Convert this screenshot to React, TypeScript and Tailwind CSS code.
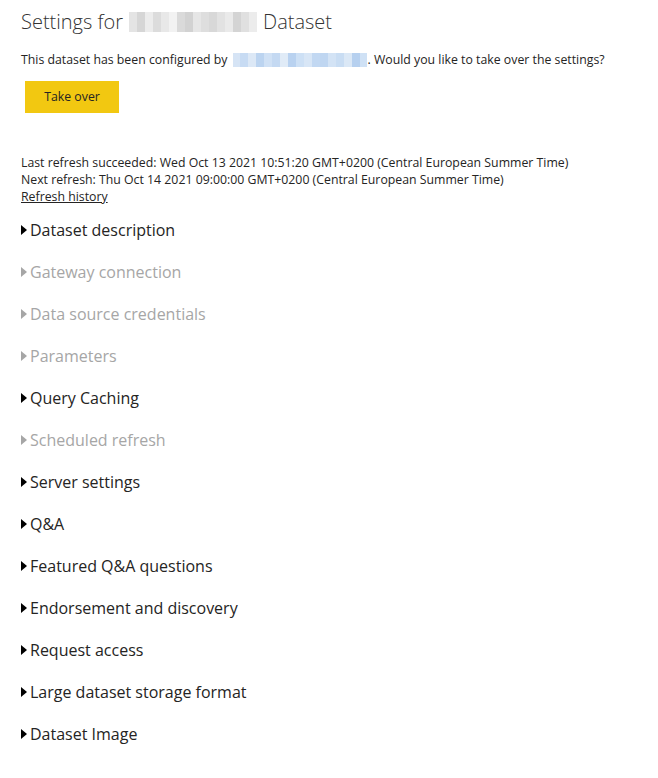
import React from 'react'

const sections: { label: string; disabled?: boolean }[] = [
  { label: 'Dataset description' },
  { label: 'Gateway connection', disabled: true },
  { label: 'Data source credentials', disabled: true },
  { label: 'Parameters', disabled: true },
  { label: 'Query Caching' },
  { label: 'Scheduled refresh', disabled: true },
  { label: 'Server settings' },
  { label: 'Q&A' },
  { label: 'Featured Q&A questions' },
  { label: 'Endorsement and discovery' },
  { label: 'Request access' },
  { label: 'Large dataset storage format' },
  { label: 'Dataset Image' },
]

// pixelated placeholder for the redacted dataset name
const nameBlur = ['#e4e4e4', '#d6d6d6', '#ececec', '#dcdcdc', '#e8e8e8', '#f2f2f2', '#dadada', '#d2d2d2', '#e6e6e6', '#dedede', '#d8d8d8', '#e2e2e2', '#eaeaea', '#d4d4d4', '#e0e0e0', '#ececec']
const emailBlur = ['#d6e4f5', '#c7dbf3', '#dce8f6', '#bcd4f0', '#d0e1f5', '#c4d9f2', '#e0ebf7', '#b9d2f0', '#cde0f5', '#d8e6f6', '#c2d8f2', '#bfd6f1', '#d3e3f5', '#c9ddf3', '#dbe8f6', '#b6d0ef', '#cfe1f5']

function Caret({ disabled }: { disabled?: boolean }) {
  return (
    <svg width="6" height="10" viewBox="0 0 6 10" className="mr-[3px] shrink-0">
      <path d="M0 0 L6 5 L0 10 Z" fill={disabled ? '#a6a6a6' : '#000000'} />
    </svg>
  )
}

export default function App() {
  return (
    <div className="min-h-[778px] bg-white pl-[21px] pt-[6px] text-[#252423]" style={{ fontFamily: '"Open Sans", sans-serif' }}>
      {/* Header */}
      <h1 className="flex items-center text-[20px] font-light leading-[32px] text-[#333333]">
        <span>Settings for</span>
        <span className="mx-[6px] flex h-[20px] w-[128px]">
          {nameBlur.map((c, i) => (
            <span key={i} className="h-full flex-1" style={{ background: c }} />
          ))}
        </span>
        <span>Dataset</span>
      </h1>
      <p className="mt-[13px] flex items-center text-[12.3px] leading-[18px]">
        <span>This dataset has been configured by</span>
        <span className="ml-[5px] flex h-[14px] w-[135px]">
          {emailBlur.map((c, i) => (
            <span key={i} className="h-full flex-1" style={{ background: c }} />
          ))}
        </span>
        <span>. Would you like to take over the settings?</span>
      </p>
      <button className="ml-[4px] mt-[12px] h-[32px] w-[94px] bg-[#f2c811] text-[12.3px] text-[#252423]">Take over</button>

      {/* Refresh info */}
      <div className="mt-[41px] text-[12.3px] leading-[17px]">
        <div>Last refresh succeeded: Wed Oct 13 2021 10:51:20 GMT+0200 (Central European Summer Time)</div>
        <div>Next refresh: Thu Oct 14 2021 09:00:00 GMT+0200 (Central European Summer Time)</div>
        <div className="underline">Refresh history</div>
      </div>

      {/* Sections */}
      <div className="mt-[14px] flex flex-col gap-[20px]">
        {sections.map((s) => (
          <div key={s.label} className={`flex h-[22px] items-center text-[16px] ${s.disabled ? 'text-[#a6a6a6]' : 'text-[#252423]'}`}>
            <Caret disabled={s.disabled} />
            <span>{s.label}</span>
          </div>
        ))}
      </div>
    </div>
  )
}
